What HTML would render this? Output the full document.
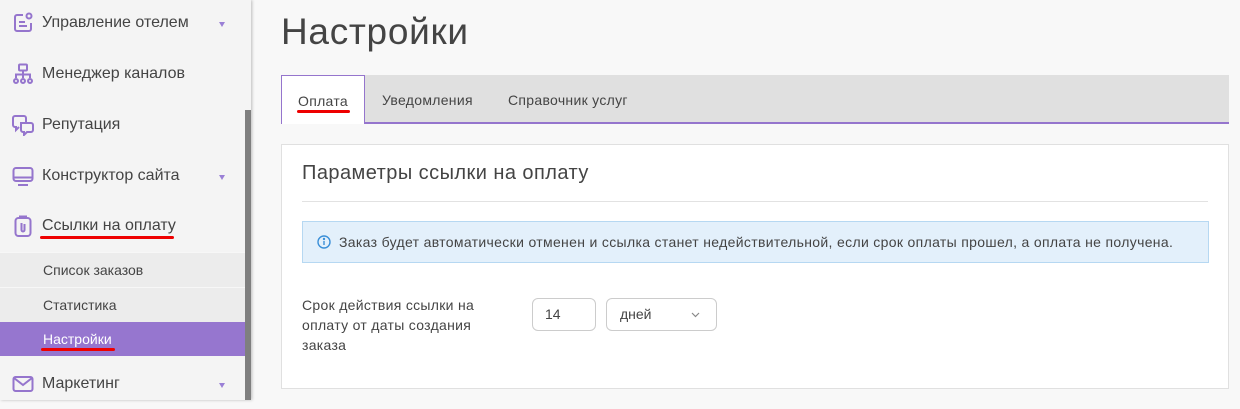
<!DOCTYPE html>
<html><head><meta charset="utf-8"><style>
*{box-sizing:border-box;margin:0;padding:0}
body{width:1240px;height:400px;overflow:hidden;background:#f8f8f8;font-family:"Liberation Sans","DejaVu Sans",sans-serif;color:#444;position:relative}
.sb{position:absolute;left:0;top:0;width:251px;height:400px;background:#f4f4f4;box-shadow:1px 0 3px rgba(0,0,0,.25)}
.scroll{position:absolute;left:245px;top:110px;width:6px;height:290px;background:#7f7f7f}
.it{position:absolute;left:0;width:245px;height:50px;font-size:16px;color:#444}
.it span.t{position:absolute;left:42px;top:50%;transform:translateY(-50%)}
.it svg.ic{position:absolute;left:12px;top:50%;transform:translateY(-50%)}
.arr{position:absolute;left:219px;top:50%;margin-top:-1px;width:0;height:0;border-left:3.5px solid transparent;border-right:3.5px solid transparent;border-top:5px solid #9a80d6}
.sub{position:absolute;left:0;width:245px;height:35px;background:#ececec;font-size:14px;color:#444;border-top:1px solid #f7f7f7}
.sub span{position:absolute;left:43px;top:50%;transform:translateY(-50%)}
.red{position:absolute;height:3px;background:#e00;border-radius:2px}
h1{position:absolute;left:281px;top:11px;font-weight:normal;font-size:37px;color:#444;letter-spacing:.7px}
.tabs{position:absolute;left:281px;top:75px;width:948px;height:49px;background:#e0e0e0;border-bottom:2px solid #9575cd}
.tab{position:absolute;top:0;height:48px;font-size:14px;line-height:50px;color:#444;letter-spacing:.3px}
.tab.a{left:0;width:84px;background:#fff;border:1px solid #9575cd;border-bottom:none;height:49px;text-align:center}
.card{position:absolute;left:281px;top:144px;width:948px;height:245px;background:#fff;border:1px solid #e0e0e0}
.ct{position:absolute;left:20px;top:17px;font-size:20px;color:#444;letter-spacing:.45px}
.hr{position:absolute;left:20px;top:56px;width:906px;height:1px;background:#e2e2e2}
.info{position:absolute;left:20px;top:76px;width:907px;height:42px;background:#e3f0fb;border:1px solid #b6d8f2;font-size:14px;line-height:40px;padding-left:36px;color:#444;letter-spacing:.33px;white-space:nowrap}
.info svg{position:absolute;left:14px;top:13px}
.lbl{position:absolute;left:20px;top:150px;font-size:14px;line-height:20px;width:200px;color:#444;letter-spacing:.3px}
.inp{position:absolute;top:153px;height:33px;border:1px solid #ccc;border-radius:6px;font-size:14px;line-height:31px;color:#444}
</style></head><body>
<div class="sb">
 <div class="it" style="top:-2px"><svg class="ic" width="22" height="22" viewBox="0 0 22 22" fill="none" stroke="#9575cd" stroke-width="2"><path d="M11 3H5a2 2 0 0 0-2 2v12a2 2 0 0 0 2 2h12a2 2 0 0 0 2-2v-6"/><circle cx="17" cy="4" r="2.5"/><path d="M7 10h6M7 14h8"/></svg><span class="t">Управление отелем</span><i class="arr"></i></div>
 <div class="it" style="top:49px"><svg class="ic" width="22" height="22" viewBox="0 0 22 22" fill="none" stroke="#9575cd" stroke-width="2"><rect x="7" y="1.5" width="8" height="6" rx="1"/><path d="M11 7.5v4M4 15v-3.5h14V15M11 11.5V15"/><circle cx="4" cy="18" r="2"/><circle cx="11" cy="18" r="2"/><circle cx="18" cy="18" r="2"/></svg><span class="t">Менеджер каналов</span></div>
 <div class="it" style="top:100px"><svg class="ic" width="22" height="22" viewBox="0 0 22 22" fill="none" stroke="#9575cd" stroke-width="2"><path d="M14 8V4a2 2 0 0 0-2-2H3a2 2 0 0 0-2 2v7a2 2 0 0 0 2 2h1v3l3-3"/><path d="M9 9h10a2 2 0 0 1 2 2v5a2 2 0 0 1-2 2h-4l-3 3v-3h-1a2 2 0 0 1-2-2z"/></svg><span class="t">Репутация</span></div>
 <div class="it" style="top:151px"><svg class="ic" width="22" height="22" viewBox="0 0 22 22" fill="none" stroke="#9575cd" stroke-width="2"><rect x="1.5" y="3" width="19" height="13" rx="2.5"/><path d="M1.5 12.5h19M6 20h10"/></svg><span class="t">Конструктор сайта</span><i class="arr"></i></div>
 <div class="it" style="top:201px"><svg class="ic" width="22" height="22" viewBox="0 0 22 22" fill="none" stroke="#9575cd" stroke-width="2"><rect x="3.5" y="3" width="15" height="18" rx="3"/><path d="M8 3V1.5h6V3"/><path d="M9.5 8v7a1.5 1.5 0 0 0 3 0V9"/></svg><span class="t">Ссылки на оплату</span></div>
 <div class="red" style="left:40px;top:236px;width:134px"></div>
 <div class="sub" style="top:252px"><span>Список заказов</span></div>
 <div class="sub" style="top:287px"><span>Статистика</span></div>
 <div class="sub" style="top:322px;background:#9676cf;color:#fff;border-top:none;height:34px"><span>Настройки</span></div>
 <div class="red" style="left:41px;top:348px;width:74px"></div>
 <div class="it" style="top:359px"><svg class="ic" width="22" height="22" viewBox="0 0 22 22" fill="none" stroke="#9575cd" stroke-width="2"><rect x="1.5" y="4" width="19" height="14" rx="2"/><path d="M2 5l9 7 9-7"/></svg><span class="t">Маркетинг</span><i class="arr"></i></div>
 <div class="scroll"></div>
</div>
<h1>Настройки</h1>
<div class="tabs">
 <div class="tab a">Оплата</div>
 <div class="tab" style="left:101px">Уведомления</div>
 <div class="tab" style="left:227px">Справочник услуг</div>
</div>
<div class="red" style="left:297px;top:110px;width:53px"></div>
<div class="card">
 <div class="ct">Параметры ссылки на оплату</div>
 <div class="hr"></div>
 <div class="info"><svg width="14" height="14" viewBox="0 0 14 14" fill="none" stroke="#3a8fd8" stroke-width="1.4"><circle cx="7" cy="7" r="6"/><path d="M7 6v4"/><circle cx="7" cy="4" r=".5" fill="#3a8fd8"/></svg>Заказ будет автоматически отменен и ссылка станет недействительной, если срок оплаты прошел, а оплата не получена.</div>
 <div class="lbl">Срок действия ссылки на оплату от даты создания заказа</div>
 <div class="inp" style="left:250px;width:64px;padding-left:12px">14</div>
 <div class="inp" style="left:324px;width:111px;padding-left:13px">дней<svg style="position:absolute;left:84px;top:13px" width="9" height="6" viewBox="0 0 9 6" fill="none" stroke="#888" stroke-width="1.2"><path d="M1 1l3.5 3.5L8 1"/></svg></div>
</div>
</body></html>
